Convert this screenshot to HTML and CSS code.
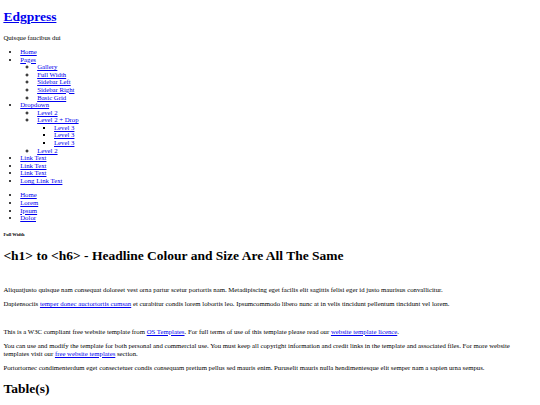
FILE: index.html
```html
<!DOCTYPE html>
<html lang="en">
<head>
<meta charset="utf-8">
<title>Edgpress</title>
<link rel="stylesheet" href="styles.css">
</head>
<body class="page">
<header class="site-header">
  <h1 class="logo"><a href="#">Edgpress</a></h1>
  <p class="tagline">Quisque faucibus dui</p>
</header>
<nav class="main-nav">
  <ul class="menu">
    <li><a href="#">Home</a></li>
    <li><a href="#">Pages</a>
      <ul class="sub">
        <li><a href="#">Gallery</a></li>
        <li><a href="#">Full Width</a></li>
        <li><a href="#">Sidebar Left</a></li>
        <li><a href="#">Sidebar Right</a></li>
        <li><a href="#">Basic Grid</a></li>
      </ul>
    </li>
    <li><a href="#">Dropdown</a>
      <ul class="sub">
        <li><a href="#">Level 2</a></li>
        <li><a href="#">Level 2 + Drop</a>
          <ul class="sub sub3">
            <li><a href="#">Level 3</a></li>
            <li><a href="#">Level 3</a></li>
            <li><a href="#">Level 3</a></li>
          </ul>
        </li>
        <li><a href="#">Level 2</a></li>
      </ul>
    </li>
    <li><a href="#">Link Text</a></li>
    <li><a href="#">Link Text</a></li>
    <li><a href="#">Link Text</a></li>
    <li><a href="#">Long Link Text</a></li>
  </ul>
</nav>
<ul class="menu breadcrumb">
  <li><a href="#">Home</a></li>
  <li><a href="#">Lorem</a></li>
  <li><a href="#">Ipsum</a></li>
  <li><a href="#">Dolor</a></li>
</ul>
<h6 class="page-title">Full Width</h6>
<main class="content">
  <h1 class="headline">&lt;h1&gt; to &lt;h6&gt; - Headline Colour and Size Are All The Same</h1>
  <p class="text first">Aliquatjusto quisque nam consequat doloreet vest orna partur scetur portortis nam. Metadipiscing eget facilis elit sagittis felisi eger id justo maurisus convallicitur.</p>
  <p class="text">Dapiensociis <a href="#">temper donec auctortortis cumsan</a> et curabitur condis lorem lobortis leo. Ipsumcommodo libero nunc at in velis tincidunt pellentum tincidunt vel lorem.</p>
  <p class="text spaced">This is a W3C compliant free website template from <a href="#">OS Templates</a>. For full terms of use of this template please read our <a href="#">website template licence</a>.</p>
  <p class="text">You can use and modify the template for both personal and commercial use. You must keep all copyright information and credit links in the template and associated files. For more website templates visit our <a href="#">free website templates</a> section.</p>
  <p class="text">Portortornec condimenterdum eget consectetuer condis consequam pretium pellus sed mauris enim. Puruselit mauris nulla hendimentesque elit semper nam a sapien urna sempus.</p>
  <h1 class="headline">Table(s)</h1>
</main>
</body>
</html>
```
FILE: styles.css
```css
html {
  background: #fff;
}
.page {
  margin: 3.375px;
  font-family: "Liberation Serif", "Times New Roman", serif;
  font-size: 6.75px;
  line-height: 7.6px;
  color: #000;
}
a {
  color: #0000ee;
}
.logo {
  font-size: 13.5px;
  line-height: 15.6px;
  margin: 5.6px 0 9.05px;
}
.tagline {
  margin: 6.75px 0;
}
.menu {
  margin: 6.75px 0;
  padding-left: 16.875px;
  list-style: disc;
}
.sub {
  margin: 0;
  padding-left: 16.875px;
  list-style: circle;
}
.sub3 {
  list-style: square;
}
.page-title {
  font-size: 4.52px;
  line-height: 5.06px;
  margin: 10.54px 0;
}
.headline {
  font-size: 13.5px;
  line-height: 15.6px;
  margin: 9.05px 0;
}
.text {
  margin: 6.75px 0;
}
.text.first {
  margin-top: 22.3px;
}
.text.spaced {
  margin-top: 20px;
}
```
